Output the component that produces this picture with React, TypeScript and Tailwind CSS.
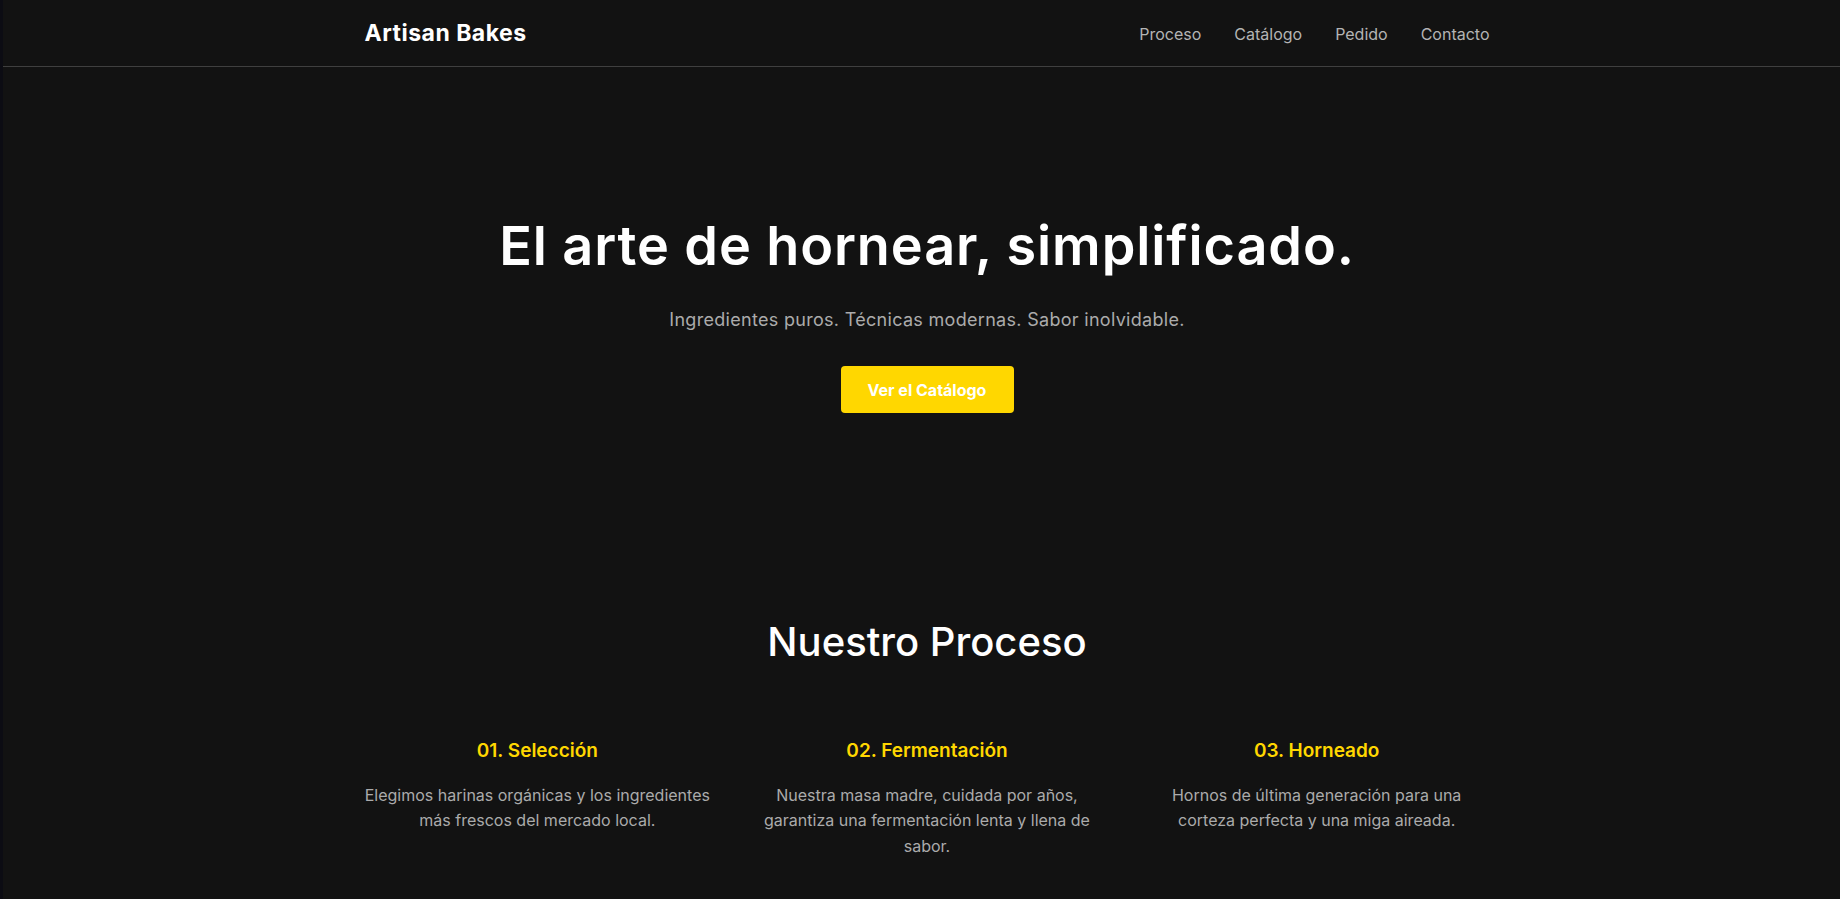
const navLinks = ["Proceso", "Catálogo", "Pedido", "Contacto"];

const steps = [
  {
    title: "01. Selección",
    text: "Elegimos harinas orgánicas y los ingredientes más frescos del mercado local.",
  },
  {
    title: "02. Fermentación",
    text: "Nuestra masa madre, cuidada por años, garantiza una fermentación lenta y llena de sabor.",
  },
  {
    title: "03. Horneado",
    text: "Hornos de última generación para una corteza perfecta y una miga aireada.",
  },
];

export default function App() {
  return (
    <div className="min-h-screen bg-[#121212] border-l-[3px] border-[#0c0c13] font-['Inter',sans-serif] text-white">
      <header className="border-b border-[#3f3f3f] pl-[11px]">
        <div className="mx-auto flex h-[66px] w-[1125px] items-center justify-between">
          <a href="#" className="text-[23px] font-bold tracking-[0.5px]">
            Artisan Bakes
          </a>
          <nav className="flex gap-[33px] pt-[2px]">
            {navLinks.map((link) => (
              <a key={link} href="#" className="text-[16px] text-[#b4b4b4]">
                {link}
              </a>
            ))}
          </nav>
        </div>
      </header>

      <main className="pl-[11px]">
        <section className="flex flex-col items-center pt-[148px] text-center">
          <h1 className="text-[54px] font-semibold leading-[62px] tracking-[0.9px]">
            El arte de hornear, simplificado.
          </h1>
          <p className="mt-[29px] text-[18px] tracking-[0.3px] text-[#ababab]">
            Ingredientes puros. Técnicas modernas. Sabor inolvidable.
          </p>
          <button className="mt-[33px] h-[47px] w-[173px] rounded-[4px] bg-[#ffd700] text-[16px] font-bold text-white">
            Ver el Catálogo
          </button>
        </section>

        <section className="mx-auto w-[1125px] pt-[205px] pb-[40px]">
          <h2 className="text-center text-[40px] font-medium leading-[48px]">Nuestro Proceso</h2>
          <div className="mt-[71px] grid grid-cols-3 gap-[44px]">
            {steps.map((step) => (
              <div key={step.title} className="text-center">
                <h3 className="text-[19px] font-semibold text-[#ffd700]">{step.title}</h3>
                <p className="mt-[17px] text-[16px] leading-[25.6px] text-[#ababab]">{step.text}</p>
              </div>
            ))}
          </div>
        </section>
      </main>
    </div>
  );
}
